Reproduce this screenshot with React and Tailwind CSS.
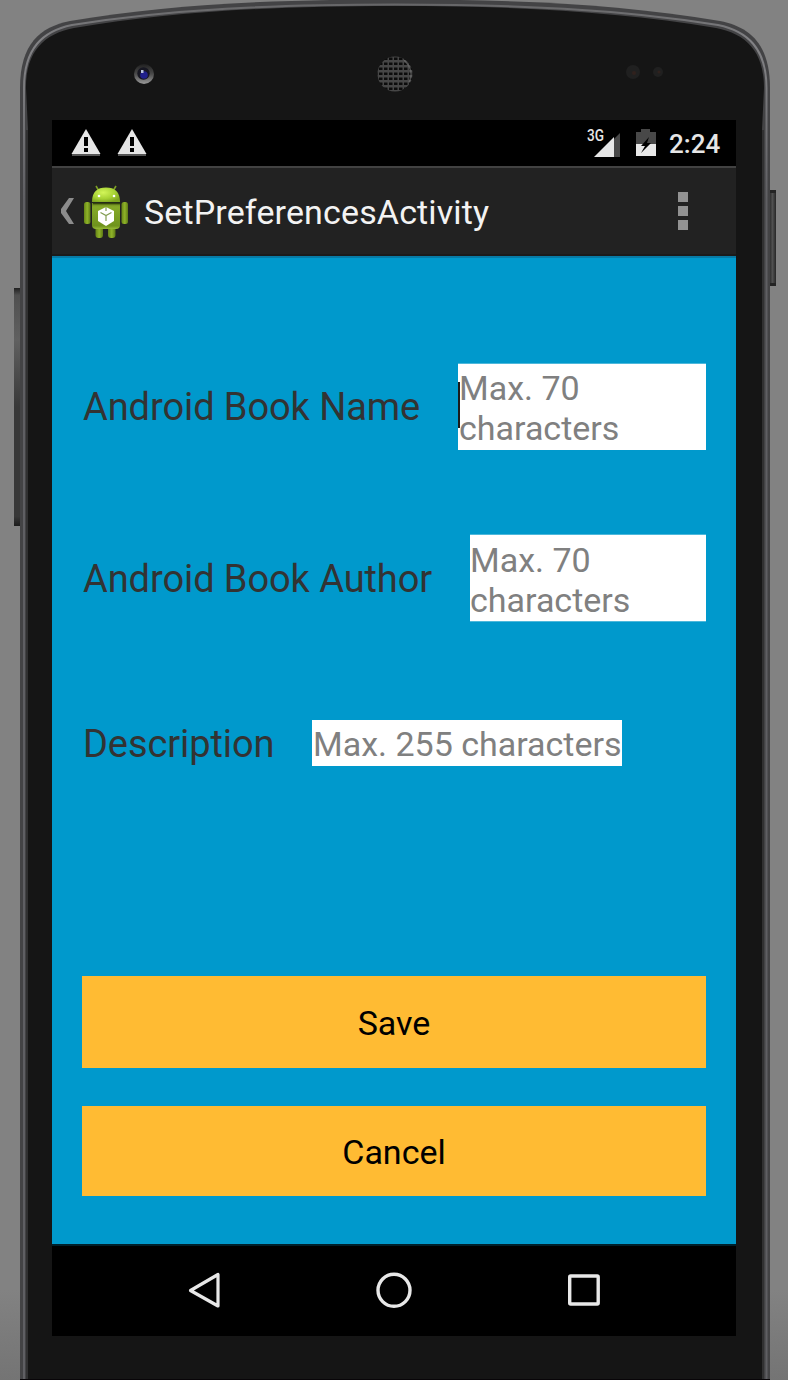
import React from "react";

function DeviceFrame() {
  return (
    <svg className="absolute inset-0" width="788" height="1380" viewBox="0 0 788 1380" aria-hidden="true">
      <defs>
        <linearGradient id="volume" x1="0" y1="0" x2="0" y2="1">
          <stop offset="0" stopColor="#202020" />
          <stop offset="0.03" stopColor="#505050" />
          <stop offset="0.22" stopColor="#606060" />
          <stop offset="0.5" stopColor="#383838" />
          <stop offset="0.96" stopColor="#383838" />
          <stop offset="1" stopColor="#1c1c1c" />
        </linearGradient>
        <linearGradient id="power" x1="0" y1="0" x2="1" y2="0">
          <stop offset="0" stopColor="#242424" />
          <stop offset="0.5" stopColor="#505050" />
          <stop offset="1" stopColor="#262626" />
        </linearGradient>
        <linearGradient id="floor" x1="0" y1="0" x2="0" y2="1">
          <stop offset="0" stopColor="#828282" />
          <stop offset="1" stopColor="#747474" />
        </linearGradient>
        <linearGradient id="lens" x1="0" y1="0" x2="0" y2="1">
          <stop offset="0" stopColor="#202020" />
          <stop offset="0.5" stopColor="#4a4a4a" />
          <stop offset="1" stopColor="#9a9a9a" />
        </linearGradient>
        <linearGradient id="rim" gradientUnits="userSpaceOnUse" x1="0" y1="0" x2="0" y2="200">
          <stop offset="0" stopColor="#636365" />
          <stop offset="0.2" stopColor="#828285" />
          <stop offset="0.4" stopColor="#7c7c7f" />
          <stop offset="1" stopColor="#5f5f63" />
        </linearGradient>
        <pattern id="mesh" x="378" y="56" width="5" height="5" patternUnits="userSpaceOnUse">
          <rect width="5" height="5" fill="#464646" />
          <rect x="1" y="1.500" width="3.500" height="2.500" fill="#0c0c0c" />
        </pattern>
      </defs>
      <rect width="788" height="1380" fill="#828282" />
      <rect y="1290" width="788" height="90" fill="url(#floor)" />
      <rect x="14" y="288" width="7" height="238" fill="url(#volume)" />
      <rect x="769" y="190" width="7" height="96" fill="url(#power)" />
      <rect x="769" y="190" width="7" height="3" fill="#242424" />
      <rect x="769" y="283" width="7" height="3" fill="#242424" />
      <path d="M20 1380V88C20 44 40 27 70 21C170 4 275 -.5 395 -.5S620 4 720 21C750 27 770 44 770 88V1380Z" fill="#434345" />
      <path d="M24 1380V88C24 48 43 31 72 25C172 9 275 4.500 395 4.500S618 9 718 25C747 31 766.500 48 766.500 88V1380" fill="none" stroke="url(#rim)" strokeWidth="2" />
      <path d="M28 1380V130L26 88C26 51 44 34 74 28C172 11.500 275 6 395 6S618 11.500 716 28C746 34 764 51 764 88L762 130V1380Z" fill="#151515" />
      <path d="M27 1380V130M763 1380V130" stroke="#303031" strokeWidth="2" />
      <circle cx="144" cy="74" r="10" fill="url(#lens)" />
      <circle cx="143.500" cy="73.500" r="6.200" fill="#171722" />
      <circle cx="144" cy="75" r="3.800" fill="#20208c" />
      <rect x="141" y="70" width="2.500" height="3" fill="#b7c2dc" />
      <circle cx="395" cy="74" r="17.500" fill="url(#mesh)" />
      <path d="M404 60Q415 71 409 82" fill="none" stroke="#747474" strokeWidth="1.500" strokeOpacity=".6" />
      <circle cx="633" cy="72" r="7" fill="#202020" />
      <circle cx="634" cy="73" r="2" fill="#30211d" />
      <circle cx="658" cy="72" r="5" fill="#202020" />
      <circle cx="659" cy="72" r="1.500" fill="#30211d" />
      <rect x="20" y="1379" width="750" height="1" fill="#080508" />
    </svg>
  );
}

function Warning() {
  return (
    <svg width="30" height="28" viewBox="0 0 30 28">
      <path d="M15 0L29.500 25H.5Z" fill="#e6e6e6" />
      <path d="M1 25H29V27H1Z" fill="#555" />
      <path d="M13 8H17V17H13ZM13 19H17V23H13Z" fill="#000" />
    </svg>
  );
}

function Signal() {
  return (
    <svg className="block" width="38" height="36" viewBox="-4 -6 38 36">
      <path d="M33 5V29H27V11Z" fill="#484848" />
      <path d="M27 9V29H7Z" fill="#e6e6e6" />
      <text x="0" y="13" fill="#e6e6e6" fontFamily="Roboto, sans-serif" fontSize="16" fontWeight="500" textLength="17" lengthAdjust="spacingAndGlyphs">3G</text>
    </svg>
  );
}

function Battery() {
  return (
    <svg width="20" height="29" viewBox="0 0 20 29">
      <path d="M0 3H5V0H14V3H20V16H0Z" fill="#484848" />
      <path d="M0 15H20V27H0Z" fill="#e8e8e8" />
      <path d="M13 8L5 17H9L5 24L15 14H11L13 8Z" fill="#000" />
    </svg>
  );
}

function AndroidLogo() {
  return (
    <svg width="46" height="54" viewBox="0 0 46 54">
      <defs>
        <linearGradient id="limb" x1="0" y1="0" x2="1" y2="0">
          <stop offset="0" stopColor="#668516" />
          <stop offset="0.5" stopColor="#8fb329" />
          <stop offset="1" stopColor="#5d7a15" />
        </linearGradient>
        <radialGradient id="head" cx=".4" cy=".35" r=".7">
          <stop offset="0" stopColor="#d2f559" />
          <stop offset="0.6" stopColor="#a7d234" />
          <stop offset="1" stopColor="#7ea421" />
        </radialGradient>
        <linearGradient id="torso" x1="0" y1="0" x2="0" y2="1">
          <stop offset="0" stopColor="#66831d" />
          <stop offset="0.15" stopColor="#86aa29" />
          <stop offset="0.88" stopColor="#6f931d" />
          <stop offset="1" stopColor="#98bb37" />
        </linearGradient>
      </defs>
      <path d="M13 1L16 6M33 1L30 6" stroke="#7c9e25" strokeWidth="1.600" />
      <rect x="1" y="17" width="6.500" height="22" rx="2.500" fill="url(#limb)" />
      <rect x="38.500" y="17" width="6.500" height="22" rx="2.500" fill="url(#limb)" />
      <rect x="12.500" y="40" width="7.500" height="13" rx="3" fill="url(#limb)" />
      <rect x="25" y="40" width="7.500" height="13" rx="3" fill="url(#limb)" />
      <path d="M9 18H37V40Q37 44 33 44H13Q9 44 9 40Z" fill="url(#torso)" />
      <path d="M9 17C9 7 14 2.500 23 2.500S37 7 37 17Z" fill="url(#head)" />
      <path d="M10 18.500H37" stroke="#34440d" strokeWidth="1.600" />
      <circle cx="16" cy="11" r="1.300" fill="#fff" />
      <circle cx="31" cy="11" r="1.300" fill="#fff" />
      <path d="M23 22L31 26V36L23 41L15 36V26Z" fill="#fff" />
      <path d="M17.500 27.500L23 30.500L28.500 27.500M23 30.500V36M23 22V26" fill="none" stroke="#829d50" strokeWidth="1.200" />
    </svg>
  );
}

function StatusBar() {
  return (
    <div className="flex h-[46px] items-start bg-black pl-[19px] pt-[9px]">
      <div className="flex gap-4"><Warning /><Warning /></div>
      <div className="-mt-[7px] ml-[436px] flex w-[38px] shrink-0"><Signal /></div>
      <div className="ml-[15px]"><Battery /></div>
      <span className="ml-[13px] text-[26px] font-medium leading-[30px] text-[#e6e6e6]">2:24</span>
    </div>
  );
}

function ActionBar() {
  return (
    <header className="flex h-[90px] items-center border-b-2 border-t-2 border-b-[#1b1b1b] border-t-[#424242] bg-[#222] pl-[8px]">
      <svg width="14" height="28" viewBox="0 0 14 28"><path d="M9 1H14L6 14L14 27H9L1 16V12Z" fill="#8c8c8c" /></svg>
      <div className="ml-[9px] mt-px"><AndroidLogo /></div>
      <h1 className="ml-[15px] w-[400px] whitespace-nowrap pt-[2px] text-[34px] leading-[40px] tracking-[0.14px] text-[#f3f3f3]">SetPreferencesActivity</h1>
      <div className="ml-[134px] flex flex-col gap-1">
        <i className="size-[10px] bg-[#929292]" />
        <i className="size-[10px] bg-[#929292]" />
        <i className="size-[10px] bg-[#929292]" />
      </div>
    </header>
  );
}

function Form() {
  return (
    <main className="flex h-[988px] flex-col border-t-2 border-[#087ba6] bg-[#0099cc] px-[30px] text-[#333]">
      <div className="mt-[105px] flex h-[87px] items-center justify-between">
        <label className="whitespace-nowrap pl-px text-[38px] leading-[44px] tracking-[-0.08px]">Android Book Name</label>
        <div className="relative h-[87px] w-[248px] border-t border-[#4db8db] bg-white pl-px pt-[4px] text-[34px] leading-[40px] text-[#808080]">
          Max. 70<br />characters
          <i className="absolute left-0 top-[18px] h-[46px] w-[2px] bg-[#1b1b1b]" />
        </div>
      </div>
      <div className="mt-[84px] flex h-[88px] items-center justify-between">
        <label className="whitespace-nowrap pl-px pt-[2px] text-[38px] leading-[44px] tracking-[-0.08px]">Android Book Author</label>
        <div className="h-[88px] w-[236px] border-b border-t border-[#4db8db] bg-white pt-[5px] text-[34px] leading-[40px] text-[#808080]">Max. 70<br />characters</div>
      </div>
      <div className="mt-[98px] flex h-[46px] items-center">
        <label className="w-[230px] whitespace-nowrap pl-px pt-[2px] text-[38px] leading-[44px] tracking-[-0.08px]">Description</label>
        <div className="h-[46px] w-[310px] whitespace-nowrap bg-white pl-px text-[34px] leading-[48px] text-[#808080]">Max. 255 characters</div>
      </div>
      <button className="mt-[210px] h-[92px] w-full bg-[#ffbb33] pt-[2px] text-[34px] leading-[40px] text-black">Save</button>
      <button className="mt-[38px] h-[90px] w-full bg-[#ffbb33] pt-[2px] text-[34px] leading-[40px] text-black">Cancel</button>
    </main>
  );
}

function NavBar() {
  return (
    <nav className="flex h-[92px] items-start border-t-2 border-[#001f29] bg-black pl-[136px] pt-[26px]">
      <svg width="36" height="36" viewBox="0 0 36 36"><path d="M30 2.500V34L2.500 18.500Z" fill="none" stroke="#e8e8e8" strokeWidth="3.200" strokeLinejoin="round" /></svg>
      <svg className="ml-[152px]" width="36" height="36" viewBox="0 0 36 36"><circle cx="18" cy="18.300" r="16" fill="none" stroke="#e8e8e8" strokeWidth="3.400" /></svg>
      <svg className="ml-[156px]" width="32" height="36" viewBox="0 0 32 36"><rect x="1.700" y="4" width="28.500" height="28" rx="1" fill="none" stroke="#e8e8e8" strokeWidth="3.400" /></svg>
    </nav>
  );
}

export default function App() {
  return (
    <div className="relative h-[1380px] w-[788px] overflow-hidden font-['Roboto',sans-serif]">
      <DeviceFrame />
      <div className="relative ml-[52px] w-[684px] pt-[120px]">
        <StatusBar />
        <ActionBar />
        <Form />
        <NavBar />
      </div>
    </div>
  );
}
